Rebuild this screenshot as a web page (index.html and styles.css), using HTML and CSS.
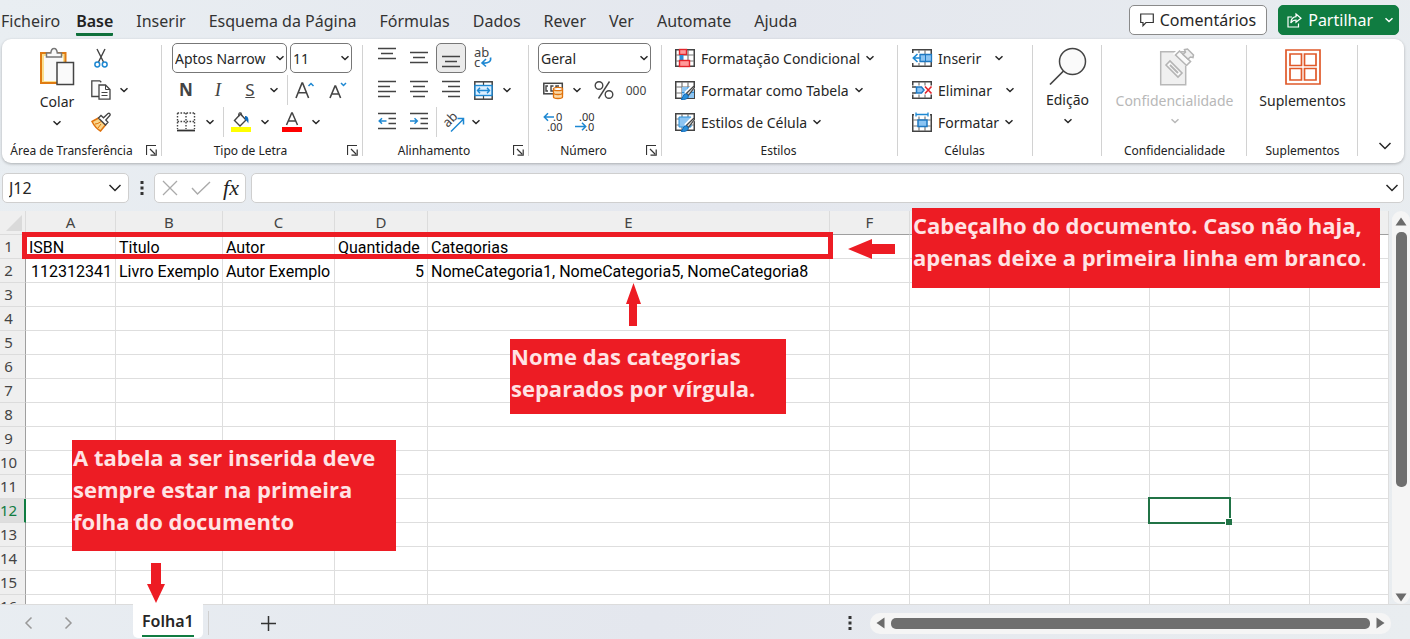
FILE: index.html
```html
<!DOCTYPE html>
<html lang="pt">
<head>
<meta charset="utf-8">
<title>Folha1</title>
<link rel="stylesheet" href="styles.css">
</head>
<body>
<svg class="defs" aria-hidden="true">
  <defs>
    <symbol id="chevron" viewBox="0 0 8 6"><path d="M.5 1.200 4 4.500 7.500 1.200" fill="none" stroke="currentColor" stroke-width="1.500"/></symbol>
    <symbol id="chevron-big" viewBox="0 0 14 8"><path d="M1.500 1 7 6.500 12.500 1" fill="none" stroke="currentColor" stroke-width="1.500"/></symbol>
    <symbol id="launcher" viewBox="0 0 11 11"><path d="M.5 10V.5H10M4 4l5 5M10.200 4.500v5.700H4.500" fill="none" stroke="#333" stroke-width="1.200"/></symbol>
    <symbol id="grid3" viewBox="0 0 20 18"><rect x=".75" y=".75" width="18.500" height="16.500" fill="#fff" stroke="#444" stroke-width="1.500"/><path d="M1 6h18M1 12h18M7 1v16M13 1v16" stroke="#777" stroke-width="1.200"/></symbol>
    <symbol id="brush" viewBox="0 0 15 15"><path d="M14 1 6 9" stroke="#fff" stroke-width="5"/><path d="M14.300 .8 6.500 8.300l2 2L14.800 2z" fill="#ddd" stroke="#444" stroke-width="1.200"/><path d="M1 14.300c2-.5 1.500-4.800 4.500-5.300 2 0 3.300 1.800 2.500 3.300-1 2-4 2.500-7 2z" fill="#2b8fd8" stroke="#0f6cbd"/></symbol>
    <symbol id="dots" viewBox="0 0 4 14"><path d="M.5 0h3v3h-3zM.5 5.500h3v3h-3zM.5 11h3v3h-3z" fill="#333"/></symbol>
  </defs>
</svg>

<header class="topbar">
  <nav class="tabs">
    <a href="#" class="file">Ficheiro</a>
    <a href="#" class="active">Base</a>
    <a href="#">Inserir</a>
    <a href="#">Esquema da Página</a>
    <a href="#">Fórmulas</a>
    <a href="#">Dados</a>
    <a href="#">Rever</a>
    <a href="#">Ver</a>
    <a href="#">Automate</a>
    <a href="#">Ajuda</a>
  </nav>
  <button class="top-btn">
    <svg width="14" height="14" viewBox="0 0 14 14"><path d="M.7 1h12.600v8.500H6L3 12.700V9.500H.7z" fill="none" stroke="#333" stroke-width="1.200"/></svg>
    Comentários
  </button>
  <button class="top-btn share">
    <svg width="15" height="15" viewBox="0 0 15 15"><path d="M5 4H1v10h10.500v-3.500M9 1l5 4.300-5 4V7C6.500 7 5 8 3.800 10 4 6.500 6 4 9 3.700z" fill="none" stroke="#fff" stroke-width="1.200"/></svg>
    Partilhar
    <svg class="chev-ico"><use href="#chevron"/></svg>
  </button>
</header>

<section class="ribbon" aria-label="Base">
  <div class="group clipboard">
    <div class="body">
      <button class="big">
        <svg width="36" height="40" viewBox="0 0 36 40"><path d="M2 6h24.500v30H2z" fill="#fbdf8e" stroke="#e07b12" stroke-width="2"/><path d="M5 9h19v25H5z" fill="#fafafa"/><path d="M7.500 10V6h4.300c.3-3 1.500-4.500 3.300-4.500S18 3 18.300 6h4.200v4z" fill="#fafafa" stroke="#777" stroke-width="1.500"/><rect x="18" y="15.500" width="16.500" height="22" fill="#fafafa" stroke="#444" stroke-width="1.500"/></svg>
        <span>Colar</span>
        <svg class="chev-ico"><use href="#chevron"/></svg>
      </button>
      <div class="rows">
        <div class="row"><button class="ico slim" aria-label="Cortar"><svg width="14" height="20" viewBox="0 0 14 20"><path d="M3 1l6.500 13M11 1 4.500 14" stroke="#444" stroke-width="1.400"/><circle cx="3.300" cy="16.500" r="2.400" fill="#fff" stroke="#1e88d2" stroke-width="1.500"/><circle cx="10.700" cy="16.500" r="2.400" fill="#fff" stroke="#1e88d2" stroke-width="1.500"/></svg></button></div>
        <div class="row"><button class="ico slim" aria-label="Copiar"><svg width="20" height="20" viewBox="0 0 20 20"><path d="M8 16.500H.8V.8h8l1.500 1.500" fill="#fafafa" stroke="#444" stroke-width="1.300"/><path d="M8 5h6.500l4.500 4.500v9.700H8z" fill="#fff" stroke="#444" stroke-width="1.300"/><path d="M14.500 5v4.500H19M10.500 12.500h6M10.500 15.500h6" fill="none" stroke="#444"/></svg></button><button class="chev" aria-label="Opções de copiar"><svg class="chev-ico"><use href="#chevron"/></svg></button></div>
        <div class="row"><button class="ico slim" aria-label="Pincel de formatação"><svg width="20" height="20" viewBox="0 0 20 20"><path d="M1 9.500 7.500 6l7 7-5 6C6 17 3 13.500 1 9.500z" fill="#f9d58a" stroke="#e0720c" stroke-width="1.500"/><path d="M4 12c3 0 5.500-2 7-3.500M7 16l3-4" stroke="#e0720c" fill="none"/><path d="M7.500 6 10 3.500l2.500 2.300L17 1.500c1.500-.8 2.700.7 2 1.800L14.800 8l2.200 2.300-2.500 2.700z" fill="#fff" stroke="#444" stroke-width="1.300"/></svg></button></div>
      </div>
    </div>
    <div class="foot"><span>Área de Transferência</span><button class="launch" aria-label="Mais opções de Área de Transferência"><svg width="11" height="11"><use href="#launcher"/></svg></button></div>
  </div>

  <div class="group font">
    <div class="rows">
      <div class="row fields">
        <label class="field w-font"><select aria-label="Tipo de letra"><option>Aptos Narrow</option></select><svg class="chev-ico"><use href="#chevron"/></svg></label>
        <label class="field w-size"><select aria-label="Tamanho"><option>11</option></select><svg class="chev-ico"><use href="#chevron"/></svg></label>
      </div>
      <div class="row">
        <button class="ico glyph"><b>N</b></button><button class="ico glyph serif"><i>I</i></button><button class="ico glyph"><u>S</u></button><button class="chev" aria-label="Sublinhado"><svg class="chev-ico"><use href="#chevron"/></svg></button>
        <span class="rule"></span>
        <button class="ico" aria-label="Aumentar tipo de letra"><svg width="20" height="20" viewBox="0 0 20 20"><path d="M1 18 7 3h.6l6 15M3.200 12.800h8.300" fill="none" stroke="#444" stroke-width="1.600"/><path d="M13.500 6 16 3.500 18.500 6" fill="none" stroke="#1e88d2" stroke-width="1.500"/></svg></button>
        <button class="ico" aria-label="Diminuir tipo de letra"><svg width="20" height="20" viewBox="0 0 20 20"><path d="M3 18 8 6h.6l5 12M4.800 14h7" fill="none" stroke="#444" stroke-width="1.600"/><path d="M14 3l2.500 2.500L19 3" fill="none" stroke="#1e88d2" stroke-width="1.500"/></svg></button>
      </div>
      <div class="row">
        <button class="ico" aria-label="Limites"><svg width="20" height="20" viewBox="0 0 20 20"><path d="M1.500 1h17M1.500 9.500h17M1.500 1v16M10 1v16M18.500 1v16" stroke="#444" stroke-width="1.400" stroke-dasharray="1.600 1.400"/><path d="M1 18.500h18" stroke="#333" stroke-width="1.800"/></svg></button><button class="chev" aria-label="Opções de limites"><svg class="chev-ico"><use href="#chevron"/></svg></button>
        <span class="rule"></span>
        <button class="ico" aria-label="Cor de preenchimento"><svg width="20" height="20" viewBox="0 0 20 20"><path d="M3.500 8.500 9.500 2l5.500 6-6 6z" fill="#fff" stroke="#444" stroke-width="1.400"/><path d="M8 4.500C7 2 8.500 0 10 1l1 3" fill="none" stroke="#444" stroke-width="1.200"/><path d="M14 4c3 0 4 2.500 3.300 7.500-1.500-3-2.300-3.500-3.300-3.800z" fill="#0f6cbd"/><rect x="0" y="15" width="20" height="5" fill="#ff0"/></svg></button><button class="chev" aria-label="Opções de preenchimento"><svg class="chev-ico"><use href="#chevron"/></svg></button>
        <button class="ico split" aria-label="Cor do tipo de letra"><svg width="20" height="20" viewBox="0 0 20 20"><path d="M4.500 13 9.700 1h.6l5.200 12M6.500 9h7" fill="none" stroke="#444" stroke-width="1.500"/><rect x="0" y="15" width="20" height="5" fill="#f00"/></svg></button><button class="chev" aria-label="Opções de cor"><svg class="chev-ico"><use href="#chevron"/></svg></button>
      </div>
    </div>
    <div class="foot"><span>Tipo de Letra</span><button class="launch" aria-label="Mais opções de Tipo de Letra"><svg width="11" height="11"><use href="#launcher"/></svg></button></div>
  </div>

  <div class="group align">
    <div class="rows">
      <div class="row">
        <button class="ico" aria-label="Alinhar em cima"><svg width="18" height="20" viewBox="0 0 18 20"><path d="M0 .5h18M3 5.500h12M0 10.500h18" stroke="#444" stroke-width="1.500"/></svg></button>
        <button class="ico" aria-label="Alinhar ao meio"><svg width="18" height="20" viewBox="0 0 18 20"><path d="M0 4.500h18M3 9.500h12M0 14.500h18" stroke="#444" stroke-width="1.500"/></svg></button>
        <button class="ico pressed" aria-label="Alinhar em baixo"><svg width="18" height="20" viewBox="0 0 18 20"><path d="M0 8.500h18M3 13.500h12M0 18.500h18" stroke="#444" stroke-width="1.500"/></svg></button>
        <button class="ico" aria-label="Moldar texto"><svg width="20" height="22" viewBox="0 0 20 22"><text x="1" y="10" class="t13">ab</text><text x="1" y="20" class="t13">c</text><path d="M17.500 10.500c1 4-2 6-8 5.500M13 12l-4 4 4 3.500" fill="none" stroke="#1e88d2" stroke-width="1.600"/></svg></button>
      </div>
      <div class="row">
        <button class="ico" aria-label="Alinhar à esquerda"><svg width="18" height="20" viewBox="0 0 18 20"><path d="M0 1.500h18M0 6.500h12M0 11.500h18M0 16.500h12" stroke="#444" stroke-width="1.500"/></svg></button>
        <button class="ico" aria-label="Centrar"><svg width="18" height="20" viewBox="0 0 18 20"><path d="M0 1.500h18M3 6.500h12M0 11.500h18M3 16.500h12" stroke="#444" stroke-width="1.500"/></svg></button>
        <button class="ico" aria-label="Alinhar à direita"><svg width="18" height="20" viewBox="0 0 18 20"><path d="M0 1.500h18M6 6.500h12M0 11.500h18M6 16.500h12" stroke="#444" stroke-width="1.500"/></svg></button>
        <button class="ico" aria-label="Unir e centrar"><svg width="19" height="19" viewBox="0 0 19 19"><rect x=".8" y=".8" width="17.400" height="17.400" fill="#fff" stroke="#444" stroke-width="1.500"/><path d="M9.500 1v17" stroke="#444" stroke-width="1.200"/><rect x="1" y="4.500" width="17" height="10" fill="#dcefff" stroke="#1e88d2" stroke-width="1.400"/><path d="M3.500 9.500h12M6 6.800 3.500 9.500 6 12.200M13 6.800l2.500 2.700-2.500 2.700" fill="none" stroke="#1e88d2" stroke-width="1.400"/></svg></button><button class="chev" aria-label="Opções de unir"><svg class="chev-ico"><use href="#chevron"/></svg></button>
      </div>
      <div class="row">
        <button class="ico" aria-label="Diminuir avanço"><svg width="18" height="20" viewBox="0 0 18 20"><path d="M0 1.500h18M10.500 6.500H18M10.500 11.500H18M0 16.500h18" stroke="#444" stroke-width="1.500"/><path d="M8.500 9h-7M4 6.200 1.200 9 4 11.800" fill="none" stroke="#1e88d2" stroke-width="1.500"/></svg></button>
        <button class="ico" aria-label="Aumentar avanço"><svg width="18" height="20" viewBox="0 0 18 20"><path d="M0 1.500h18M10.500 6.500H18M10.500 11.500H18M0 16.500h18" stroke="#444" stroke-width="1.500"/><path d="M0 9h7M4.500 6.200 7.300 9l-2.800 2.800" fill="none" stroke="#1e88d2" stroke-width="1.500"/></svg></button>
        <span class="rule close"></span>
        <button class="ico narrow" aria-label="Orientação"><svg width="22" height="22" viewBox="0 0 22 22"><text x="1" y="16" class="t13" transform="rotate(-45 4 12)">ab</text><path d="M8 20.500 20 8.500M14.500 7.500H20.500V13.500" fill="none" stroke="#1e88d2" stroke-width="1.500"/></svg></button><button class="chev" aria-label="Opções de orientação"><svg class="chev-ico"><use href="#chevron"/></svg></button>
      </div>
    </div>
    <div class="foot"><span>Alinhamento</span><button class="launch" aria-label="Mais opções de Alinhamento"><svg width="11" height="11"><use href="#launcher"/></svg></button></div>
  </div>

  <div class="group number">
    <div class="rows">
      <div class="row fields">
        <label class="field grow"><select aria-label="Formato do número"><option>Geral</option></select><svg class="chev-ico"><use href="#chevron"/></svg></label>
      </div>
      <div class="row">
        <button class="ico" aria-label="Formato de contabilidade"><svg width="20" height="18" viewBox="0 0 20 18"><rect x=".8" y="2.300" width="18.500" height="10.500" fill="#fff" stroke="#444" stroke-width="1.500"/><path d="M5 5H3v5h2M10.500 5H8v5h2M13 7V5h3" fill="none" stroke="#444" stroke-width="1.400"/><path d="M10.500 8v8c0 2 9 2 9 0V8z" fill="#fbd9a6" stroke="#e0720c" stroke-width="1.300"/><ellipse cx="15" cy="8" rx="4.500" ry="1.700" fill="#fff" stroke="#e0720c" stroke-width="1.300"/><path d="M10.500 12c0 2 9 2 9 0" fill="none" stroke="#e0720c" stroke-width="1.300"/></svg></button><button class="chev" aria-label="Opções de contabilidade"><svg class="chev-ico"><use href="#chevron"/></svg></button>
        <button class="ico split" aria-label="Percentagem"><svg width="20" height="20" viewBox="0 0 20 20"><circle cx="5" cy="5.500" r="3.800" fill="none" stroke="#444" stroke-width="1.400"/><circle cx="15" cy="14.500" r="3.800" fill="none" stroke="#444" stroke-width="1.400"/><path d="M15.500 1.500 4.500 18.500" stroke="#444" stroke-width="1.400"/></svg></button>
        <button class="ico zeros">000</button>
      </div>
      <div class="row">
        <button class="ico" aria-label="Aumentar casas decimais"><svg width="20" height="22" viewBox="0 0 20 22"><text x="10" y="10" class="t11">.0</text><text x="4" y="20" class="t11">.00</text><path d="M11 6H1.500M5 2.300 1.300 6 5 9.700" fill="none" stroke="#1e88d2" stroke-width="1.500"/></svg></button>
        <button class="ico" aria-label="Diminuir casas decimais"><svg width="20" height="22" viewBox="0 0 20 22"><text x="4" y="10" class="t11">.00</text><text x="10" y="20" class="t11">.0</text><path d="M0 15.500h10.500M7 11.800l3.700 3.700L7 19.200" fill="none" stroke="#1e88d2" stroke-width="1.500"/></svg></button>
      </div>
    </div>
    <div class="foot"><span>Número</span><button class="launch" aria-label="Mais opções de Número"><svg width="11" height="11"><use href="#launcher"/></svg></button></div>
  </div>

  <div class="group styles">
    <div class="rows">
      <div class="row"><button class="cmd"><svg width="20" height="20" viewBox="0 0 20 20"><use href="#grid3" y="1" width="20" height="18"/><rect x="4.500" y="1.500" width="7" height="5" fill="#ff9a9a" stroke="#e3242b" stroke-width="1.400"/><rect x="4.500" y="7" width="4" height="5.500" fill="#2b8fd8"/><rect x="4.500" y="12.500" width="10" height="6" fill="#ff9a9a" stroke="#e3242b" stroke-width="1.400"/></svg>Formatação Condicional<svg class="chev-ico"><use href="#chevron"/></svg></button></div>
      <div class="row"><button class="cmd"><svg width="20" height="20" viewBox="0 0 20 20"><use href="#grid3" y="1" width="20" height="18"/><path d="M7 7h12v11H7z" fill="#8cc4f2"/><path d="M13 7v11M7 12.500h12" stroke="#2b8fd8"/><use href="#brush" x="5" y="5" width="15" height="15"/></svg>Formatar como Tabela<svg class="chev-ico"><use href="#chevron"/></svg></button></div>
      <div class="row"><button class="cmd"><svg width="20" height="20" viewBox="0 0 20 20"><use href="#grid3" y="1" width="20" height="18"/><path d="M4 5h12v10H4z" fill="#8cc4f2" stroke="#2b8fd8"/><use href="#brush" x="5" y="5" width="15" height="15"/></svg>Estilos de Célula<svg class="chev-ico"><use href="#chevron"/></svg></button></div>
    </div>
    <div class="foot"><span>Estilos</span></div>
  </div>

  <div class="group cells">
    <div class="rows">
      <div class="row"><button class="cmd wide"><svg width="20" height="20" viewBox="0 0 20 20"><use href="#grid3" y="1" width="20" height="18"/><path d="M0 5h9v10H0z" fill="#fff"/><path d="M8 6.500h11.500v7H8z" fill="#8cc4f2" stroke="#1e78c2" stroke-width="1.300"/><path d="M13.500 6.500v7" stroke="#1e78c2"/><path d="M9 10H1.500M5.500 6 1.300 10l4.200 4" fill="none" stroke="#1e88d2" stroke-width="1.600"/></svg>Inserir<svg class="chev-ico"><use href="#chevron"/></svg></button></div>
      <div class="row"><button class="cmd wide"><svg width="20" height="20" viewBox="0 0 20 20"><use href="#grid3" y="1" width="20" height="18"/><path d="M0 5.500h20v9H0z" fill="#fff"/><path d="M0 7h4M0 13h4" stroke="#444" stroke-width="1.400"/><path d="M4.500 7h5l2.500 3-2.500 3h-5z" fill="#8cc4f2" stroke="#1e78c2" stroke-width="1.500"/><path d="M13 6.500l6.500 7M19.500 6.500l-6.500 7" stroke="#e3242b" stroke-width="1.600"/></svg>Eliminar<svg class="chev-ico"><use href="#chevron"/></svg></button></div>
      <div class="row"><button class="cmd"><svg width="20" height="20" viewBox="0 0 20 20"><use href="#grid3" y="2" width="20" height="18"/><path d="M2 0h16v4.500H2z" fill="#fff"/><path d="M4 2.500h12M4 .5v4M16 .5v4" stroke="#1e88d2" stroke-width="1.300"/><path d="M6 8h9v6.500H6z" fill="#8cc4f2" stroke="#1e78c2" stroke-width="1.500"/></svg>Formatar<svg class="chev-ico"><use href="#chevron"/></svg></button></div>
    </div>
    <div class="foot"><span>Células</span></div>
  </div>

  <div class="group edit">
    <button class="big">
      <svg width="38" height="38" viewBox="0 0 38 38"><circle cx="23.500" cy="14.500" r="13" fill="#fafafa" stroke="#444" stroke-width="1.500"/><path d="M14.500 24 1 37.500" stroke="#444" stroke-width="1.700"/></svg>
      <span>Edição</span>
      <svg class="chev-ico"><use href="#chevron"/></svg>
    </button>
  </div>

  <div class="group privacy">
    <button class="big" disabled>
      <svg width="36" height="40" viewBox="0 0 36 40"><path d="M3.700 4.700h25v33h-25z" fill="#f0f0f0" stroke="#b8b8b8" stroke-width="1.500"/><path d="M16 7l5-5 15 14-5 5z" fill="#fff"/><path d="M18.500 8 22.500 4 33.500 14.500 29.500 18.500z" fill="#fafafa" stroke="#b4b4b4" stroke-width="1.600"/><path d="M26 7.500 28.500 5l-1-2.500 3-.5 6 6-.5 2.500-2.500-.5-2.500 2z" fill="#f0f0f0" stroke="#b4b4b4" stroke-width="1.500"/><path d="M9 18 13 14 25 26 21 30z" fill="#fafafa" stroke="#b4b4b4" stroke-width="1.600"/><path d="M13 18l8 8" stroke="#b4b4b4" stroke-width="2"/></svg>
      <span>Confidencialidade</span>
      <svg class="chev-ico"><use href="#chevron"/></svg>
    </button>
    <div class="foot"><span>Confidencialidade</span></div>
  </div>

  <div class="group addins">
    <button class="big">
      <svg width="36" height="40" viewBox="0 0 36 40"><path d="M1 3h34v34H1z" fill="#fff" stroke="#e0592a" stroke-width="1.700"/><path d="M5 7h11.500v11.500H5zM19.500 7H31v11.500H19.500zM5 21.500h11.500V33H5zM19.500 21.500H31V33H19.500z" fill="#fff" stroke="#e0592a" stroke-width="1.700"/></svg>
      <span>Suplementos</span>
    </button>
    <div class="foot"><span>Suplementos</span></div>
  </div>

  <button class="collapse" aria-label="Fechar o friso"><svg width="14" height="8"><use href="#chevron-big"/></svg></button>
</section>

<section class="formula-bar">
  <label class="name-box"><input aria-label="Caixa de nome" value="J12"><svg width="14" height="8"><use href="#chevron-big"/></svg></label>
  <svg class="handle" width="4" height="14"><use href="#dots"/></svg>
  <div class="fx-box">
    <button aria-label="Cancelar" disabled><svg width="16" height="16" viewBox="0 0 16 16"><path d="M1 1l14 14M15 1 1 15" stroke="#aaa" stroke-width="1.300"/></svg></button>
    <button aria-label="Introduzir" disabled><svg width="20" height="14" viewBox="0 0 20 14"><path d="M1 7l5.500 6L19 1" fill="none" stroke="#aaa" stroke-width="1.400"/></svg></button>
    <button class="fx">fx</button>
  </div>
  <label class="formula"><input aria-label="Fórmula"><svg width="14" height="8"><use href="#chevron-big"/></svg></label>
</section>

<main class="work">
  <div class="sheet">
    <div class="viewport">
      <table>
        <colgroup><col class="c-head"><col class="c-a"><col class="c-b"><col class="c-c"><col class="c-d"><col class="c-e"><col class="c-n"><col class="c-n"><col class="c-n"><col class="c-n"><col class="c-n"><col class="c-n"><col></colgroup>
        <thead>
          <tr><th class="corner"><svg width="16" height="16" viewBox="0 0 16 16"><path d="M16 0v16H0z" fill="#dadada"/></svg></th><th>A</th><th>B</th><th>C</th><th>D</th><th>E</th><th>F</th><th></th><th></th><th></th><th></th><th></th><th></th></tr>
        </thead>
        <tbody>
          <tr><th>1</th><td>ISBN</td><td>Titulo</td><td>Autor</td><td>Quantidade</td><td>Categorias</td><td></td><td></td><td></td><td></td><td></td><td></td><td></td></tr>
          <tr><th>2</th><td class="num">112312341</td><td>Livro Exemplo</td><td>Autor Exemplo</td><td class="num">5</td><td>NomeCategoria1, NomeCategoria5, NomeCategoria8</td><td></td><td></td><td></td><td></td><td></td><td></td><td></td></tr>
          <tr><th>3</th><td></td><td></td><td></td><td></td><td></td><td></td><td></td><td></td><td></td><td></td><td></td><td></td></tr>
          <tr><th>4</th><td></td><td></td><td></td><td></td><td></td><td></td><td></td><td></td><td></td><td></td><td></td><td></td></tr>
          <tr><th>5</th><td></td><td></td><td></td><td></td><td></td><td></td><td></td><td></td><td></td><td></td><td></td><td></td></tr>
          <tr><th>6</th><td></td><td></td><td></td><td></td><td></td><td></td><td></td><td></td><td></td><td></td><td></td><td></td></tr>
          <tr><th>7</th><td></td><td></td><td></td><td></td><td></td><td></td><td></td><td></td><td></td><td></td><td></td><td></td></tr>
          <tr><th>8</th><td></td><td></td><td></td><td></td><td></td><td></td><td></td><td></td><td></td><td></td><td></td><td></td></tr>
          <tr><th>9</th><td></td><td></td><td></td><td></td><td></td><td></td><td></td><td></td><td></td><td></td><td></td><td></td></tr>
          <tr><th>10</th><td></td><td></td><td></td><td></td><td></td><td></td><td></td><td></td><td></td><td></td><td></td><td></td></tr>
          <tr><th>11</th><td></td><td></td><td></td><td></td><td></td><td></td><td></td><td></td><td></td><td></td><td></td><td></td></tr>
          <tr><th class="current">12</th><td></td><td></td><td></td><td></td><td></td><td></td><td></td><td></td><td></td><td class="selected"></td><td></td><td></td></tr>
          <tr><th>13</th><td></td><td></td><td></td><td></td><td></td><td></td><td></td><td></td><td></td><td></td><td></td><td></td></tr>
          <tr><th>14</th><td></td><td></td><td></td><td></td><td></td><td></td><td></td><td></td><td></td><td></td><td></td><td></td></tr>
          <tr><th>15</th><td></td><td></td><td></td><td></td><td></td><td></td><td></td><td></td><td></td><td></td><td></td><td></td></tr>
          <tr><th>16</th><td></td><td></td><td></td><td></td><td></td><td></td><td></td><td></td><td></td><td></td><td></td><td></td></tr>
        </tbody>
      </table>
    </div>
    <div class="frame"></div>
    <p class="note note-header">Cabeçalho do documento. Caso não haja,<br>apenas deixe a primeira linha em branco<span>.</span></p>
    <p class="note note-categories">Nome das categorias<br>separados por vírgula.</p>
    <p class="note note-sheet">A tabela a ser inserida deve<br>sempre estar na primeira<br>folha do documento</p>
    <svg class="arrow arrow-left" width="47" height="20" viewBox="0 0 47 20"><path d="M0 10 24 0v5h23v10H24v5z"/></svg>
    <svg class="arrow arrow-up" width="15" height="43" viewBox="0 0 15 43"><path d="M7.500 0 15 21h-4v22H3V21H0z"/></svg>
    <svg class="arrow arrow-down" width="18" height="40" viewBox="0 0 18 40"><path d="M9 40 0 21h4V0h10v21h4z"/></svg>
  </div>
  <div class="vscroll">
    <svg width="12" height="9" viewBox="0 0 12 9"><path d="M6 .5 11.500 8.500H.5z"/></svg>
    <span class="thumb"></span>
    <svg class="end" width="12" height="9" viewBox="0 0 12 9"><path d="M6 8.500 11.500 .5H.5z"/></svg>
  </div>
</main>

<footer class="bottom">
  <button class="nav" aria-label="Folha anterior"><svg width="9" height="14" viewBox="0 0 9 14"><path d="M7.500 1.500 2 7l5.500 5.500" fill="none" stroke="#999" stroke-width="1.500"/></svg></button>
  <button class="nav" aria-label="Folha seguinte"><svg width="9" height="14" viewBox="0 0 9 14"><path d="M1.500 1.500 7 7l-5.500 5.500" fill="none" stroke="#999" stroke-width="1.500"/></svg></button>
  <button class="sheet-tab"><span>Folha1</span></button>
  <span class="tab-rule"></span>
  <button class="add" aria-label="Nova folha"><svg width="15" height="15" viewBox="0 0 15 15"><path d="M7.500 0v15M0 7.500h15" stroke="#333" stroke-width="1.500"/></svg></button>
  <svg class="split-dots" width="4" height="14"><use href="#dots"/></svg>
  <div class="hscroll">
    <svg width="9" height="12" viewBox="0 0 9 12"><path d="M.5 6 8.500 .5v11z"/></svg>
    <span class="thumb"></span>
    <svg width="9" height="12" viewBox="0 0 9 12"><path d="M8.500 6 .5 .5v11z"/></svg>
  </div>
</footer>
</body>
</html>
```
FILE: styles.css
```css
* { box-sizing: border-box; }

body {
  margin: 0;
  height: 100vh;
  display: flex;
  flex-direction: column;
  overflow: hidden;
  background: linear-gradient(100deg, #e9eef2 0%, #e4e7ee 50%, #e9edf0 100%);
  color: #262626;
  font-family: "Noto Sans", "Open Sans", sans-serif;
  font-size: 14px;
}

button, input, select {
  font: inherit;
  color: inherit;
  border: 0;
  padding: 0;
  margin: 0;
  background: none;
}

svg { display: block; flex: none; overflow: visible; }
.defs { width: 0; height: 0; position: absolute; }
.chev-ico { width: 8px; height: 6px; }

/* Tabs and top actions */
.topbar {
  display: flex;
  height: 39px;
  padding: 5px 11px 3px 1px;
}
.tabs { display: flex; flex: 1; gap: 23px; }
.tabs a {
  color: #333;
  font-size: 16px;
  line-height: 32px;
  height: 31px;
  text-decoration: none;
  white-space: nowrap;
}
.tabs .file { margin-right: -7px; }
.tabs .active {
  font-weight: 600;
  color: #222;
  border-bottom: 3px solid #0f703b;
  border-radius: 1px;
}
.top-btn {
  display: flex;
  align-items: center;
  height: 30px;
  gap: 6px;
  padding: 0 10px;
  font-size: 16px;
  background: #fff;
  border: 1px solid #8a8a8a;
  border-radius: 5px;
}
.share {
  margin-left: 11px;
  padding: 0 5px 0 8px;
  color: #fff;
  background: #107c41;
  border-color: #107c41;
}
.share .chev-ico { margin-left: 6px; }

/* Ribbon */
.ribbon {
  display: flex;
  height: 124px;
  margin: 0 6px 0 2px;
  padding-top: 3px;
  background: #fff;
  border-radius: 9px;
  box-shadow: 0 1px 3px #0004;
}
.group {
  display: flex;
  flex-direction: column;
  flex: none;
  background: linear-gradient(#d2d2d2, #d2d2d2) right 3px / 1px 111px no-repeat;
}
.clipboard { width: 160px; }
.font { width: 201px; padding-left: 8px; }
.align { width: 166px; padding-left: 8px; }
.number { width: 133px; padding-left: 8px; }
.styles { width: 236px; padding-left: 13px; }
.cells { width: 135px; padding-left: 14px; }
.edit { width: 69px; }
.privacy { width: 145px; }
.addins { width: 111px; }

.body { display: flex; padding-left: 33px; gap: 12px; }
.rows { display: flex; flex-direction: column; height: 96px; }
.row { display: flex; align-items: center; height: 32px; }
.fields { gap: 3px; padding: 0 9px 0 2px; }
.number .fields { padding: 0 11px 0 1px; }

.ico {
  display: flex;
  align-items: center;
  justify-content: center;
  width: 32px;
  height: 30px;
  flex: none;
}
.slim { width: 20px; }
.narrow { width: 28px; }
.chev {
  display: flex;
  align-items: center;
  justify-content: center;
  width: 16px;
  height: 30px;
}
.body .chev { margin-left: 5px; }
.split { margin-left: 3px; }
.pressed {
  background: #ebebeb;
  border: 1px solid #777;
  border-radius: 5px;
  width: 30px;
  margin: 0 1px;
}
.glyph { font-size: 17px; line-height: 20px; color: #444; }
.serif { font-family: "Liberation Serif", serif; font-size: 19px; }
.zeros { font-size: 12px; color: #444; }
.rule { width: 1px; height: 30px; margin: 0 1px 0 5px; background: #d2d2d2; }
.close { margin: 0 3px 0 1px; }
.t13 { font: 13px "Noto Sans", sans-serif; fill: #444; }
.t11 { font: 11px "Noto Sans", sans-serif; fill: #333; }

.field { display: grid; align-items: center; }
.field > * { grid-area: 1 / 1; }
.field select {
  appearance: none;
  width: 100%;
  height: 30px;
  padding-left: 2px;
  font-size: 14px;
  background: #fff;
  border: 1px solid #777;
  border-radius: 5px;
}
.field .chev-ico { justify-self: end; margin-right: 3px; pointer-events: none; }
.w-font { width: 115px; }
.w-size { width: 62px; }
.grow { flex: 1; }
.number .rows { align-self: stretch; }

.cmd {
  display: flex;
  align-items: center;
  gap: 6px;
  height: 30px;
  font-size: 14px;
  white-space: nowrap;
}
.wide .chev-ico { margin-left: 8px; }

.big {
  display: flex;
  flex-direction: column;
  align-items: center;
  padding-top: 5px;
  height: 96px;
  gap: 5px;
  line-height: 20px;
}
.big .chev-ico { margin-top: 3px; }
.body .big { width: 44px; }
.privacy .big { gap: 4px; color: #b8b8b8; }
.addins .big { gap: 4px; }

.foot {
  display: flex;
  align-items: center;
  height: 26px;
  font-size: 12px;
  color: #222;
}
.foot span { flex: 1; text-align: center; white-space: nowrap; }
.launch { padding: 0 5px; }
.font .foot, .align .foot, .number .foot { margin-left: -11px; }
.styles .foot, .cells .foot { margin-left: -16px; }

.collapse { margin: auto 10px 11px auto; padding: 2px; }

/* Formula bar */
.formula-bar {
  display: flex;
  align-items: center;
  height: 30px;
  margin: 10px 6px 8px 2px;
}
.name-box, .fx-box, .formula {
  display: flex;
  align-items: center;
  height: 30px;
  background: #fff;
  border: 1px solid #cfcfcf;
  border-radius: 5px;
}
.name-box { width: 127px; padding: 0 6px; }
.name-box input { flex: 1; min-width: 0; font-size: 16px; line-height: 24px; }
.handle { margin: 0 10px 0 11px; }
.fx-box { width: 92px; margin-right: 5px; padding: 0 6px 0 7px; justify-content: space-between; }
.fx { font: italic 400 22px/24px "Liberation Serif", serif; color: #222; }
.formula { flex: 1; padding: 0 4px 0 8px; }
.formula input { flex: 1; }

/* Worksheet */
.work { display: flex; flex: 1; min-height: 0; }
.sheet { flex: 1; position: relative; min-width: 0; }
.viewport { height: 100%; overflow: hidden; background: #fff; }
table {
  width: 100%;
  table-layout: fixed;
  border-collapse: separate;
  border-spacing: 0;
}
.c-head { width: 26px; }
.c-a { width: 90px; }
.c-b { width: 107px; }
.c-c { width: 112px; }
.c-d { width: 93px; }
.c-e { width: 402px; }
.c-n { width: 80px; }
tr { height: 24px; }
th {
  height: 24px;
  padding: 0;
  background: #efefef;
  color: #444;
  font-size: 15px;
  font-weight: 400;
  line-height: 20px;
  vertical-align: top;
}
thead th { padding-top: 1px; border-right: 1px solid #dcdcdc; border-bottom: 1px solid #9f9f9f; }
thead .corner { padding: 4px 0 0 6px; border-bottom-color: #dcdcdc; }
tbody th {
  padding: 1px 8px 0 0;
  border-right: 1px solid #9f9f9f;
  border-bottom: 1px solid #dcdcdc;
}
tbody .current { background: #dedede; color: #107c41; border-right: 2px solid #107c41; }
td {
  height: 24px;
  padding: 2px 3px 0;
  border-right: 1px solid #dedede;
  border-bottom: 1px solid #dedede;
  color: #000;
  font: 16px/21px Roboto, sans-serif;
  white-space: nowrap;
}
.num { text-align: right; }
.selected { position: relative; }
.selected::before {
  content: "";
  position: absolute;
  inset: -2px;
  border: 2px solid #217346;
}
.selected::after {
  content: "";
  position: absolute;
  right: -3px;
  bottom: -3px;
  width: 6px;
  height: 6px;
  background: #217346;
  border: solid #fff;
  border-width: 1px 0 0 1px;
}

/* Annotations laid over the worksheet */
.frame {
  position: absolute;
  left: 22px;
  top: 21px;
  width: 811px;
  height: 27px;
  border: 5px solid #ed1c24;
}
.note {
  position: absolute;
  margin: 0;
  padding: 1px 0 0 1px;
  background: #ed1c24;
  color: #ffe3e4;
  font: 700 22px/32px "Open Sans", sans-serif;
  white-space: nowrap;
}
.note span { font-weight: 400; }
.note-header { left: 912px; top: -3px; width: 468px; height: 80px; }
.note-categories { left: 510px; top: 128px; width: 276px; height: 75px; }
.note-sheet { left: 72px; top: 229px; width: 324px; height: 111px; }
.arrow { position: absolute; fill: #ed1c24; }
.arrow-left { left: 848px; top: 28px; }
.arrow-up { left: 626px; top: 72px; }
.arrow-down { left: 147px; top: 352px; }

/* Scrollbars */
.vscroll, .hscroll { display: flex; align-items: center; background: #f5f5f5; fill: #6b6b6b; }
.vscroll {
  flex-direction: column;
  width: 18px;
  margin-left: 3px;
  padding: 6px 0 2px;
  border-radius: 9px;
}
.vscroll .thumb { width: 11px; height: 255px; margin-top: 6px; border-radius: 5px; background: #6f6f6f; }
.vscroll .end { margin-top: auto; }
.hscroll {
  width: 521px;
  height: 21px;
  padding: 0 6px;
  gap: 6px;
  border-radius: 10px;
}
.hscroll .thumb { flex: 1; height: 11px; border-radius: 5px; background: #6f6f6f; }

/* Sheet tabs */
.bottom {
  display: flex;
  align-items: center;
  height: 35px;
  padding: 2px 19px 0 8px;
  border-top: 1px solid #dcdcdc;
}
.nav { width: 40px; height: 30px; display: flex; align-items: center; justify-content: center; }
.sheet-tab {
  align-self: flex-start;
  height: 34px;
  margin: -3px 5px 0 45px;
  padding: 3px 9px 0;
  background: #fff;
  border-radius: 0 0 5px 5px;
  font-size: 16px;
  font-weight: 600;
}
.sheet-tab span { display: block; line-height: 27px; height: 29px; border-bottom: 2px solid #107c41; }
.tab-rule { width: 1px; height: 24px; background: #cfcfcf; }
.add { margin-left: 51px; padding: 1px; }
.split-dots { margin: 0 18px 0 auto; }
```
